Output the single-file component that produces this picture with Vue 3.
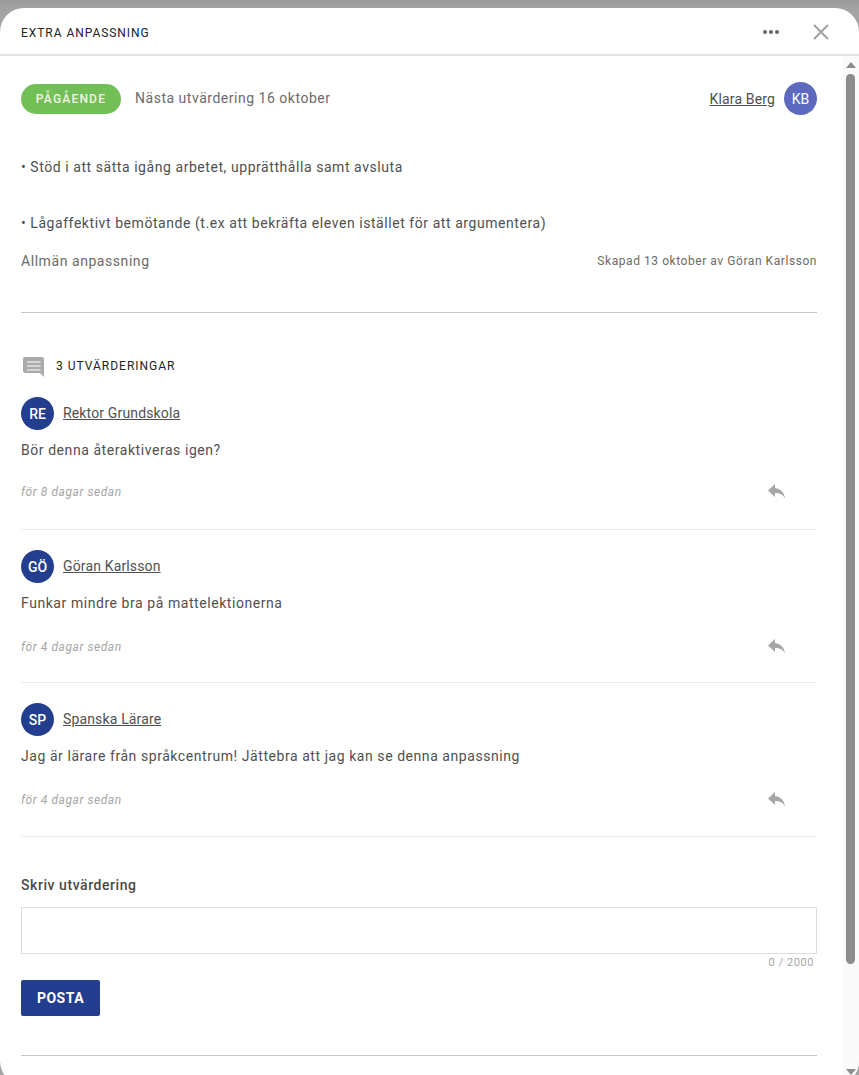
<script setup>
const items = [
  { init: 'RE', name: 'Rektor Grundskola', text: 'Bör denna återaktiveras igen?', when: 'för 8 dagar sedan' },
  { init: 'GÖ', name: 'Göran Karlsson', text: 'Funkar mindre bra på mattelektionerna', when: 'för 4 dagar sedan' },
  { init: 'SP', name: 'Spanska Lärare', text: 'Jag är lärare från språkcentrum! Jättebra att jag kan se denna anpassning', when: 'för 4 dagar sedan' }
]
</script>

<template>
  <div class="backdrop">
    <div class="modal">
      <header class="head">
        <span class="title">EXTRA ANPASSNING</span>
        <svg class="dots" width="18" height="6" viewBox="0 0 18 6"><circle cx="3" cy="3" r="2" /><circle cx="9" cy="3" r="2" /><circle cx="15" cy="3" r="2" /></svg>
        <svg class="close" width="16" height="16" viewBox="0 0 16 16"><path d="M1 1l14 14M15 1L1 15" /></svg>
      </header>
      <div class="body">
        <main class="content">
          <div class="top">
            <span class="pill">PÅGÅENDE</span>
            <span class="next">Nästa utvärdering 16 oktober</span>
            <a class="owner">Klara Berg</a>
            <span class="av av-kb">KB</span>
          </div>
          <p class="bullet b1">• Stöd i att sätta igång arbetet, upprätthålla samt avsluta</p>
          <p class="bullet b2">• Lågaffektivt bemötande (t.ex att bekräfta eleven istället för att argumentera)</p>
          <div class="meta">
            <span class="kind">Allmän anpassning</span>
            <span class="created">Skapad 13 oktober av Göran Karlsson</span>
          </div>
          <hr class="rule" />
          <div class="count">
            <svg class="count-icon" width="24" height="24" viewBox="0 0 24 24"><path d="M3 4h17a2 2 0 0 1 2 2v18l-4-4H3a2 2 0 0 1-2-2V6a2 2 0 0 1 2-2z" fill="#aaa" /><path d="M5 9h13.500M5 13h13.500M5 17h13.500" stroke="#e4e4e4" stroke-width="1.700" /></svg>
            <span>3 UTVÄRDERINGAR</span>
          </div>
          <article v-for="(c, i) in items" :key="i" class="item">
            <div class="who">
              <span class="av">{{ c.init }}</span>
              <a class="name">{{ c.name }}</a>
            </div>
            <p class="text">{{ c.text }}</p>
            <div class="foot">
              <span class="when">{{ c.when }}</span>
              <svg class="reply" width="18" height="15" viewBox="0 0 18 15"><path d="M7 4V0L0 6.500 7 13V9c5 0 8 1.500 10 5.500C16.500 9 13 5 7 4z" fill="#a6a6a6" /></svg>
            </div>
          </article>
          <label class="label">Skriv utvärdering</label>
          <div class="input"></div>
          <div class="counter">0 / 2000</div>
          <button class="post">POSTA</button>
          <hr class="rule last" />
        </main>
        <aside class="scroll">
          <i class="up"></i>
          <i class="thumb"></i>
          <i class="down"></i>
        </aside>
      </div>
    </div>
  </div>
</template>

<style>
html, body { margin: 0; background: #a0a0a0; }
</style>

<style scoped>
.backdrop { height: 1075px; overflow: hidden; padding-top: 8px; box-sizing: border-box; background: linear-gradient(#999, #a3a3a3 8px); font-family: Roboto, sans-serif; letter-spacing: .56px; color: #505050; }
.modal { height: 1077px; background: #fff; border-radius: 24px; overflow: hidden; display: flex; flex-direction: column; }
.head { flex: none; border-bottom: 2px solid #e2e2e2; display: flex; align-items: center; padding: 2px 30px 0 21px; height: 44px; }
.title { flex: 1; font-size: 12px; letter-spacing: .95px; color: #222; line-height: 16px; padding-top: 2px; }
.dots { fill: #666; margin-right: 33px; }
.close { stroke: #a0a0a0; stroke-width: 2; fill: none; }
.body { flex: 1; display: flex; min-height: 0; }
.content { flex: 1; padding: 0 26px 0 21px; min-width: 0; }
.top { display: flex; align-items: center; margin-top: 26px; height: 33px; }
.pill { width: 100px; height: 30px; border-radius: 15px; background: #72bf58; color: #f4f4e4; font-size: 12px; letter-spacing: 1.2px; font-weight: 500; display: flex; align-items: center; justify-content: center; }
.next { flex: 1; margin-left: 14px; font-size: 14px; letter-spacing: .52px; color: #6b6b6b; margin-bottom: 2px; }
.owner { font-size: 14px; letter-spacing: .15px; text-decoration: underline; margin-right: 9px; }
.av { width: 33px; height: 33px; flex: none; border-radius: 50%; background: #243e8f; color: #fff; font-size: 14px; letter-spacing: 0; font-weight: 500; display: flex; align-items: center; justify-content: center; }
.av-kb { background: #5c69bf; font-weight: 400; }
.bullet { margin: 0; font-size: 14px; line-height: 20px; }
.b1 { margin-top: 42px; }
.b2 { margin-top: 36px; }
.meta { display: flex; justify-content: space-between; align-items: center; margin-top: 18px; height: 20px; }
.kind { font-size: 14px; color: #6b6b6b; }
.created { font-size: 12px; color: #6b6b6b; }
.rule { border: 0; height: 1px; background: #c4c4c4; margin: 41px 0 0; }
.count { display: flex; align-items: center; gap: 10px; margin: 41px 0 0 1px; height: 24px; font-size: 12px; letter-spacing: 1px; color: #222; }
.count-icon { margin-top: -2px; }
.item { height: 132px; border-bottom: 1px solid #ececec; margin-bottom: 20px; }
.count + .item { margin-top: 19px; }
.item:nth-of-type(3) { height: 133px; }
.who { display: flex; align-items: center; gap: 9px; }
.name { font-size: 14px; letter-spacing: .15px; text-decoration: underline; margin-bottom: 2px; }
.text { margin: 10px 0 0; font-size: 14px; line-height: 20px; }
.foot { display: flex; justify-content: space-between; align-items: center; margin-top: 26px; padding-right: 31px; }
.item:first-of-type .foot { margin-top: 24px; }
.when { font-size: 12px; font-style: italic; color: #a6a6a6; }
.reply { flex: none; }
.label { display: block; font-size: 14px; font-weight: 500; margin-top: 38px; line-height: 20px; color: #4a4a4a; }
.input { height: 45px; margin-top: 12px; border: 1px solid #dedede; }
.counter { text-align: right; padding-right: 3px; font-size: 11px; color: #a6a6a6; line-height: 16px; margin-top: 1px; }
.post { display: block; width: 79px; height: 36px; margin-top: 9px; border: 0; border-radius: 2px; background: #243e8f; color: #fff; font: 700 14px Roboto, sans-serif; letter-spacing: .5px; padding: 0; }
.rule.last { margin-top: 39px; }
.scroll { width: 16px; flex: none; background: #fafafa; position: relative; }
.thumb { position: absolute; left: 3px; top: 18px; width: 9px; height: 890px; background: #8c8c8c; border-radius: 5px; }
.up, .down { position: absolute; left: 3px; width: 0; height: 0; border-left: 5px solid transparent; border-right: 5px solid transparent; }
.up { top: 6px; border-bottom: 6px solid #8c8c8c; }
.down { bottom: 10px; border-top: 6px solid #8c8c8c; }
</style>
